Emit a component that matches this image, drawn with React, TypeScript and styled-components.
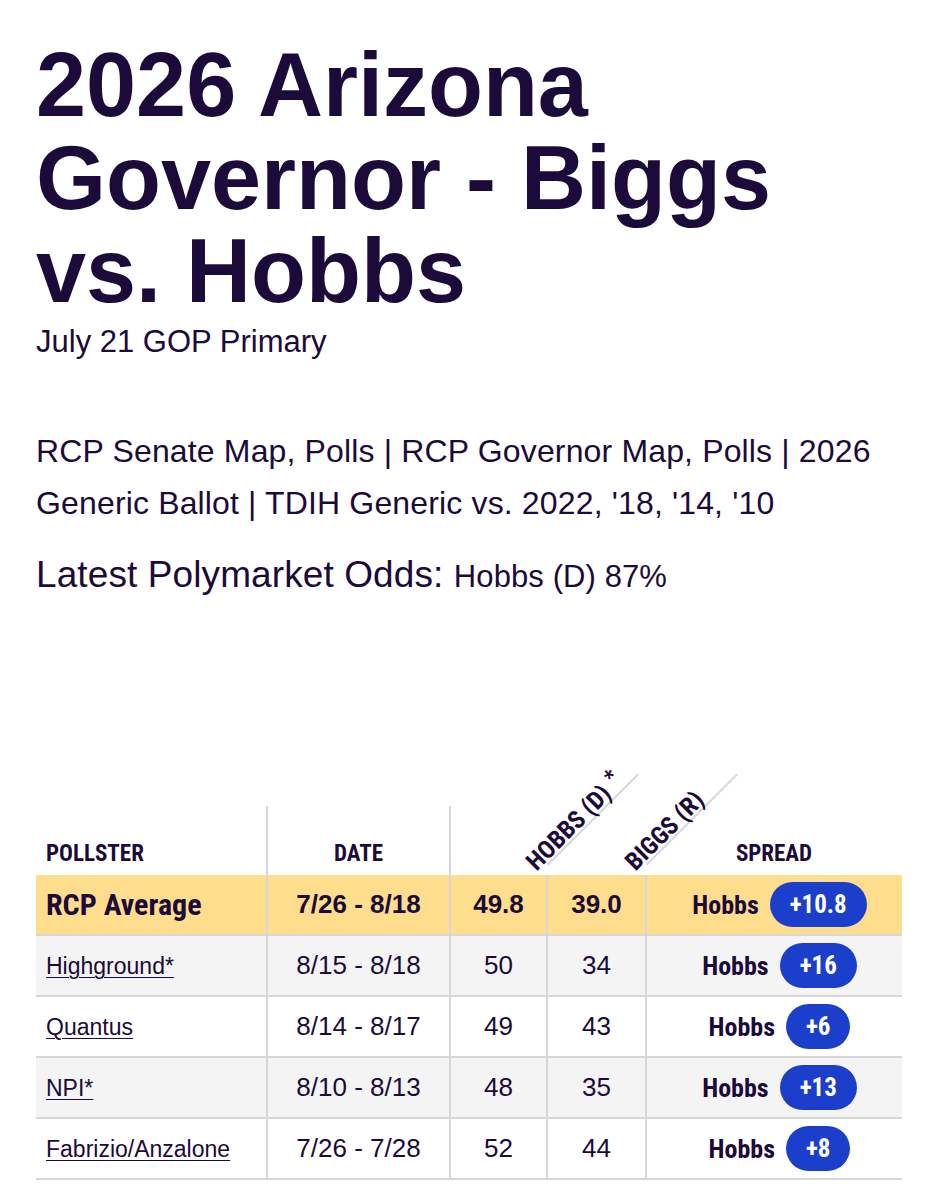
import React from "react";
import styled, { createGlobalStyle, css } from "styled-components";

const INK = "#1c0a3a";
const LINE = "#d7d7d7";
const SANS = `"Liberation Sans", Arial, Helvetica, sans-serif`;

const narrow = css`
  font-family: Roboto, "Liberation Sans", sans-serif;
  font-stretch: 75%;
  font-weight: 700;
`;

const Global = createGlobalStyle`
  html, body { margin: 0; padding: 0; background: #ffffff; }
  body { font-family: ${SANS}; color: ${INK}; }
`;

const Page = styled.main`
  width: 866px;
  padding: 39px 36px 40px;
`;

const Title = styled.h1`
  margin: 0;
  font-size: 90px;
  line-height: 93px;
  font-weight: 700;
`;

const Subtitle = styled.p`
  margin: 6px 0 0;
  font-size: 31px;
  line-height: 36px;
`;

const Links = styled.p`
  margin: 65px 0 0;
  font-size: 32px;
  line-height: 52px;
  letter-spacing: 0.15px;
`;

const Odds = styled.p`
  margin: 24px 0 0;
  font-size: 37px;
  line-height: 44px;
  letter-spacing: 0.1px;
`;

const OddsValue = styled.span`
  font-size: 31px;
`;

const Table = styled.table`
  margin-top: 207px;
  width: 866px;
  table-layout: fixed;
  border-collapse: collapse;
  border-spacing: 0;
`;

const Col = styled.col<{ $w: number }>`
  width: ${(p) => p.$w}px;
`;

const HeadCell = styled.th<{ $divider?: boolean; $left?: boolean }>`
  position: relative;
  height: 59px;
  padding: 0 10px 10px;
  vertical-align: bottom;
  text-align: ${(p) => (p.$left ? "left" : "center")};
  ${narrow};
  font-size: 23px;
  line-height: 23px;
  color: ${INK};
  border-right: ${(p) => (p.$divider ? `2px solid ${LINE}` : "none")};
`;

const Slant = styled.div`
  position: absolute;
  left: 100%;
  bottom: 9px;
  width: 128px;
  height: 0;
  border-top: 2px solid ${LINE};
  transform-origin: 0 0;
  transform: rotate(-45deg);
`;

const SlantText = styled.span`
  position: absolute;
  left: -13px;
  bottom: 0;
  white-space: nowrap;
  ${narrow};
  font-size: 25px;
  line-height: 25px;
  color: ${INK};
`;

const Star = styled.sup`
  font-size: 22px;
  line-height: 0;
  margin-left: 7px;
  vertical-align: 7px;
`;

type Tone = "avg" | "alt" | "plain";

const Row = styled.tr<{ $tone: Tone }>`
  background: ${(p) =>
    p.$tone === "avg" ? "#fedd8d" : p.$tone === "alt" ? "#f4f4f4" : "#ffffff"};
`;

const Cell = styled.td<{ $strong?: boolean; $left?: boolean; $last?: boolean }>`
  height: 59px;
  padding: 0 10px;
  border-bottom: 2px solid ${LINE};
  border-right: ${(p) => (p.$last ? "none" : `2px solid ${LINE}`)};
  text-align: ${(p) => (p.$left ? "left" : "center")};
  vertical-align: middle;
  font-size: 26px;
  font-weight: ${(p) => (p.$strong ? 700 : 400)};
  color: ${INK};
  white-space: nowrap;
`;

const AvgName = styled.span`
  ${narrow};
  font-size: 30px;
`;

const PollsterLink = styled.a`
  font-size: 23px;
  color: ${INK};
  text-decoration: underline;
  text-decoration-thickness: 1px;
  text-underline-offset: 3px;
`;

const Spread = styled.div`
  display: flex;
  align-items: center;
  justify-content: center;
  gap: 11px;
  padding-left: 10px;
`;

const Leader = styled.span`
  ${narrow};
  font-size: 26px;
  color: ${INK};
`;

const Pill = styled.span`
  display: inline-flex;
  align-items: center;
  height: 45px;
  padding: 0 20px;
  border-radius: 23px;
  background: #1c3fcb;
  color: #ffffff;
  ${narrow};
  font-size: 25px;
`;

type Poll = {
  pollster: string;
  date: string;
  hobbs: string;
  biggs: string;
  spread: string;
};

const polls: Poll[] = [
  { pollster: "Highground*", date: "8/15 - 8/18", hobbs: "50", biggs: "34", spread: "+16" },
  { pollster: "Quantus", date: "8/14 - 8/17", hobbs: "49", biggs: "43", spread: "+6" },
  { pollster: "NPI*", date: "8/10 - 8/13", hobbs: "48", biggs: "35", spread: "+13" },
  { pollster: "Fabrizio/Anzalone", date: "7/26 - 7/28", hobbs: "52", biggs: "44", spread: "+8" },
];

export default function App() {
  return (
    <>
      <Global />
      <Page>
        <Title>2026 Arizona Governor - Biggs vs. Hobbs</Title>
        <Subtitle>July 21 GOP Primary</Subtitle>
        <Links>
          RCP Senate Map, Polls | RCP Governor Map, Polls | 2026 Generic Ballot | TDIH Generic vs.
          2022, '18, '14, '10
        </Links>
        <Odds>
          Latest Polymarket Odds: <OddsValue>Hobbs (D) 87%</OddsValue>
        </Odds>

        <Table>
          <colgroup>
            <Col $w={231} />
            <Col $w={183} />
            <Col $w={97} />
            <Col $w={99} />
            <Col $w={256} />
          </colgroup>
          <thead>
            <tr>
              <HeadCell $left $divider>POLLSTER</HeadCell>
              <HeadCell $divider>DATE</HeadCell>
              <HeadCell>
                <Slant>
                  <SlantText>
                    HOBBS (D)<Star>*</Star>
                  </SlantText>
                </Slant>
              </HeadCell>
              <HeadCell>
                <Slant>
                  <SlantText>BIGGS (R)</SlantText>
                </Slant>
              </HeadCell>
              <HeadCell>SPREAD</HeadCell>
            </tr>
          </thead>
          <tbody>
            <Row $tone="avg">
              <Cell $left>
                <AvgName>RCP Average</AvgName>
              </Cell>
              <Cell $strong>7/26 - 8/18</Cell>
              <Cell $strong>49.8</Cell>
              <Cell $strong>39.0</Cell>
              <Cell $last>
                <Spread>
                  <Leader>Hobbs</Leader>
                  <Pill>+10.8</Pill>
                </Spread>
              </Cell>
            </Row>
            {polls.map((p, i) => (
              <Row key={p.pollster} $tone={i % 2 === 0 ? "alt" : "plain"}>
                <Cell $left>
                  <PollsterLink href="#">{p.pollster}</PollsterLink>
                </Cell>
                <Cell>{p.date}</Cell>
                <Cell>{p.hobbs}</Cell>
                <Cell>{p.biggs}</Cell>
                <Cell $last>
                  <Spread>
                    <Leader>Hobbs</Leader>
                    <Pill>{p.spread}</Pill>
                  </Spread>
                </Cell>
              </Row>
            ))}
          </tbody>
        </Table>
      </Page>
    </>
  );
}
